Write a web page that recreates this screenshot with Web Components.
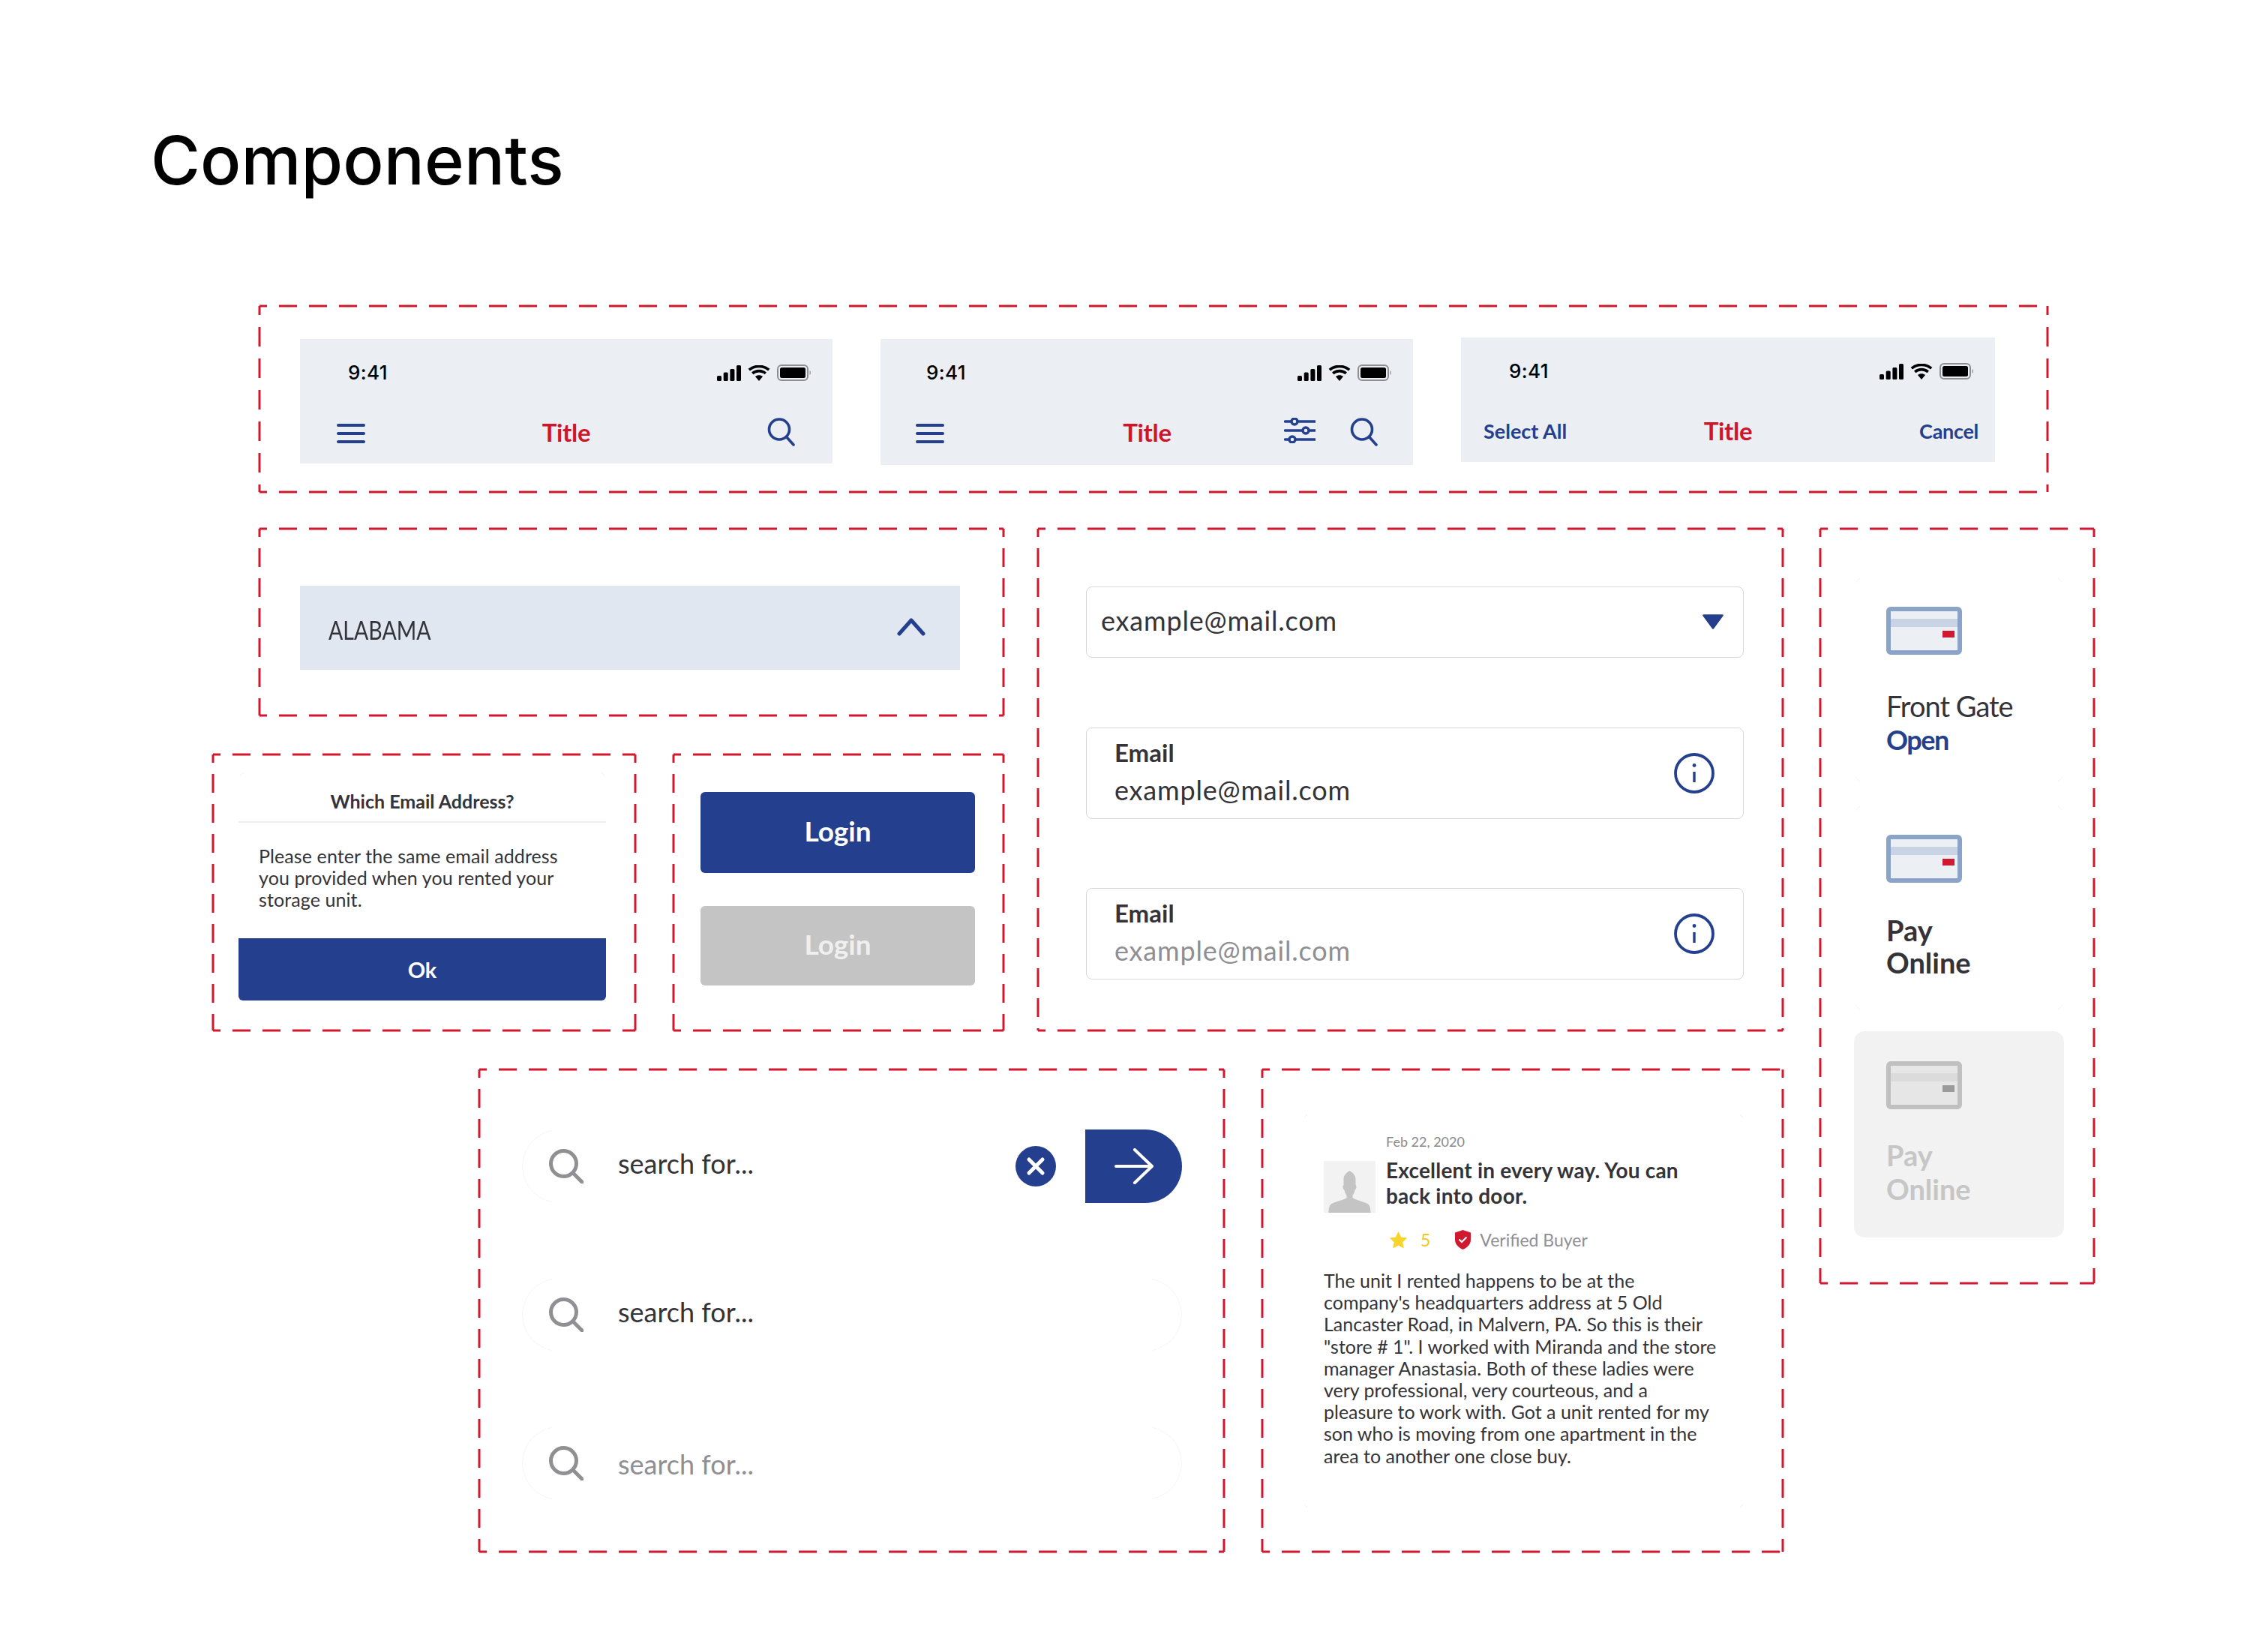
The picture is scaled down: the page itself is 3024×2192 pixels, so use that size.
<!DOCTYPE html>
<html lang="en"><head><meta charset="utf-8"><title>Components</title>
<style>
html,body{margin:0;background:#fff}
body{--ui:Lato,"Noto Sans",sans-serif;--navy:#243f8e;--red:#d0182f;--ink:#333338;font-family:var(--ui);color:var(--ink);width:3024px;height:2192px;overflow:hidden}
.page{display:flex;flex-direction:column;padding:0 0 0 200px}
.top{margin-left:145px}
.below{display:flex;align-items:flex-start;gap:48px;margin-left:83px;margin-top:47px}
.main{display:flex;flex-direction:column;gap:50px}
.rowA{display:flex;gap:44px}
.rowB{display:flex;gap:49px;margin-left:355px}
.leftcol{display:flex;flex-direction:column;gap:50px}
.pair{display:flex;gap:49px}
</style></head><body>
<div class="page">
  <page-title>Components</page-title>
  <dash-box class="top" style="width:2386px;height:250px;--vp:26 16;--pad:45px 0 0 55px;--flow:row;--gap:64px">
    <phone-bar><nav-icon slot="left" kind="menu"></nav-icon><nav-icon slot="right" kind="search"></nav-icon></phone-bar>
    <phone-bar style="height:168px;--time-pad:61px;--nav-l:47px;--nav-r:46px"><nav-icon slot="left" kind="menu"></nav-icon><nav-icon slot="right" kind="sliders"></nav-icon><nav-icon slot="right" kind="search"></nav-icon></phone-bar>
    <phone-bar style="margin-top:-2px;width:712px;--nav-l:26px;--nav-r:26px"><nav-text slot="left" style="margin-left:4px">Select All</nav-text><nav-text slot="right" style="margin-right:-4px;letter-spacing:-.3px">Cancel</nav-text></phone-bar>
  </dash-box>
  <div class="below">
    <div class="main">
      <div class="rowA">
        <div class="leftcol">
          <dash-box style="width:994px;height:251px;margin-left:62px;--pad:77px 0 0 55px">
            <state-select>ALABAMA</state-select>
          </dash-box>
          <div class="pair">
            <dash-box style="width:565px;height:370px;--pad:23px 0 0 35px"><alert-dialog heading="Which Email Address?" action="Ok">Please enter the same email address<br>you provided when you rented your<br>storage unit.</alert-dialog></dash-box>
            <dash-box style="width:442px;height:370px;--pad:51px 0 0 37px;--gap:44px">
              <login-button>Login</login-button>
              <login-button disabled style="height:106px">Login</login-button>
            </dash-box>
          </div>
        </div>
        <dash-box style="width:995px;height:671px;--pad:78px 0 0 65px;--gap:0">
          <select-field>example@mail.com</select-field>
          <label-field label="Email" style="margin-top:93px">example@mail.com</label-field>
          <label-field label="Email" muted style="margin-top:92px">example@mail.com</label-field>
        </dash-box>
      </div>
      <div class="rowB">
        <dash-box style="width:995px;height:645px;--pad:81px 0 0 58px;--gap:100px">
          <search-row active>search for...</search-row>
          <search-row>search for...</search-row>
          <search-row muted>search for...</search-row>
        </dash-box>
        <dash-box style="width:696px;height:645px;--pad:59px 0 0 55px">
          <review-card date="Feb 22, 2020" rating="5" badge="Verified Buyer">
            <span slot="title">Excellent in every way. You can<br>back into door.</span>
            The unit I rented happens to be at the<br>company's headquarters address at 5 Old<br>Lancaster Road, in Malvern, PA. So this is their<br>"store # 1". I worked with Miranda and the store<br>manager Anastasia. Both of these ladies were<br>very professional, very courteous, and a<br>pleasure to work with. Got a unit rented for my<br>son who is moving from one apartment in the<br>area to another one close buy.
          </review-card>
        </dash-box>
      </div>
    </div>
    <dash-box style="width:367px;height:1008px;--pad:65px 0 0 46px;--gap:29px">
      <tile-card style="--tile-gap:46px" line1="Front Gate" line2="Open" variant="status"></tile-card>
      <tile-card style="--tile-gap:42px" line1="Pay" line2="Online" variant="bold"></tile-card>
      <tile-card style="--tile-gap:39px;margin-top:-2px" line1="Pay" line2="Online" variant="disabled"></tile-card>
    </dash-box>
  </div>
</div>
<script>
const maskOf=(w,h,bottom=true)=>{const g='linear-gradient(#000 0 0)',b=bottom?`${w}px ${h}px`:'0 0',m=`${g} 0 0/${w}px ${h}px no-repeat,${g} 100% 0/${w}px ${h}px no-repeat,${g} 0 100%/${b} no-repeat,${g} 100% 100%/${b} no-repeat`;return `-webkit-mask:${m};mask:${m};`};
const faint=(w,h,c,r,bottom=true)=>`position:absolute;inset:0;border:1.5px solid ${c};box-sizing:border-box;border-radius:${r}px;pointer-events:none;${maskOf(w,h,bottom)}`;
const ICONS={
 menu:`<svg width="38" height="28" viewBox="0 0 38 28" style="margin-top:3px"><g stroke="#243f8e" stroke-width="4" stroke-linecap="round"><path d="M2 3h34M2 14h34M2 25h34"/></g></svg>`,
 search:`<svg width="38" height="38" viewBox="0 0 38 38" fill="none" stroke="#243f8e" stroke-width="3.6" stroke-linecap="round"><circle cx="16" cy="15.500" r="13.500"/><path d="M25.500 25.500L35 36"/></svg>`,
 sliders:`<svg width="42" height="34" viewBox="0 0 42 34" fill="none" stroke="#243f8e" stroke-width="3.400" stroke-linecap="round" style="margin-right:46px"><path d="M1.500 5h40M1.500 17h40M1.500 29h40"/><circle cx="14" cy="5" r="4" fill="#ebeef3"/><circle cx="29" cy="17" r="4" fill="#ebeef3"/><circle cx="11" cy="29" r="4" fill="#ebeef3"/></svg>`
};
const define=(name,cls)=>customElements.define(name,cls);
class Base extends HTMLElement{
  constructor(){super();this.attachShadow({mode:'open'})}
  connectedCallback(){this.shadowRoot.innerHTML=this.render()}
  a(n,d=''){return this.getAttribute(n)??d}
}
define('page-title',class extends Base{render(){return `<style>:host{display:block;box-sizing:content-box;font:500 90px/120px Inter,sans-serif;color:#000;padding:154px 0 0 1px;height:253px;letter-spacing:.1px}</style><slot></slot>`}});
define('dash-box',class extends Base{render(){return `<style>
:host{display:block;position:relative;box-sizing:border-box;flex:none}
svg{position:absolute;left:.5px;top:.5px;width:calc(100% - 2px);height:calc(100% - 2px);overflow:visible;pointer-events:none}
line{stroke:#d0182f;stroke-width:3;stroke-dasharray:24 16;stroke-dashoffset:14}
.v{stroke-dasharray:var(--vp,25 15)}
.in{display:flex;flex-direction:var(--flow,column);gap:var(--gap,0);padding:var(--pad,0);align-items:flex-start}
</style><svg><line x1="0" y1="0" x2="100%" y2="0"/><line x1="0" y1="100%" x2="100%" y2="100%"/><line class="v" x1="0" y1="0" x2="0" y2="100%"/><line class="v" x1="100%" y1="0" x2="100%" y2="100%"/></svg><div class="in"><slot></slot></div>`}});
define('status-row',class extends Base{render(){return `<style>
:host{display:flex;align-items:center;justify-content:space-between;height:42px;padding:24px 29px 0 var(--time-pad,64px)}
.t{font:500 26px/1 Inter,"Liberation Sans",sans-serif;color:#000;letter-spacing:.4px}
.i{display:flex;align-items:center;gap:9px}
</style><span class="t">9:41</span><span class="i">
<svg width="32" height="21" viewBox="0 0 32 21"><g fill="#000"><rect x="0" y="14" width="6" height="7" rx="1.500"/><rect x="8.700" y="9.500" width="6" height="11.500" rx="1.500"/><rect x="17.400" y="5" width="6" height="16" rx="1.500"/><rect x="26" y="0" width="6" height="21" rx="1.500"/></g></svg>
<svg width="30" height="21" viewBox="0 0 30 21"><path d="M15 21l-5-6c3-2.300 7-2.300 10 0z" fill="#000"/><g fill="none" stroke="#000" stroke-width="3.600"><path d="M6.200 10.800c5-4.200 12.600-4.200 17.600 0"/><path d="M1.800 6.100c7.500-6.300 18.900-6.300 26.400 0"/></g></svg>
<svg width="45" height="22" viewBox="0 0 45 22"><rect x="1" y="1" width="40" height="20" rx="5" fill="none" stroke="#8e8e93" stroke-width="2"/><rect x="4" y="4" width="34" height="14" rx="2.500" fill="#000"/><path d="M43.500 8v6c1-.4 1.500-1.600 1.500-3s-.5-2.600-1.500-3z" fill="#9a9aa0"/></svg>
</span>`}});
define('nav-icon',class extends Base{render(){return `<style>:host{display:block;line-height:0}</style>${ICONS[this.a('kind')]}`}});
define('nav-text',class extends Base{render(){return `<style>:host{display:block;font:700 27px/36px var(--ui);color:var(--navy);padding-top:2px}</style><slot></slot>`}});
define('phone-bar',class extends Base{render(){return `<style>
:host{display:block;flex:none;width:710px;height:166px;background:#ebeef3;box-sizing:border-box}
.nav{display:grid;grid-template-columns:1fr auto 1fr;align-items:center;padding:38px var(--nav-r,49px) 0 var(--nav-l,49px);height:40px}
.l{display:flex}.r{display:flex;justify-content:flex-end}
b{font:700 33px/40px var(--ui);color:#d0152b;letter-spacing:-.3px}
</style><status-row></status-row><div class="nav"><div class="l"><slot name="left"></slot></div><b>Title</b><div class="r"><slot name="right"></slot></div></div>`}});
define('state-select',class extends Base{render(){return `<style>
:host{display:flex;align-items:center;justify-content:space-between;width:880px;height:112px;background:#e1e7f1;box-sizing:border-box;padding:0 46px 0 38px;font:400 34px/1 var(--ui);color:var(--ink)}
span{display:inline-block;transform:scaleX(.84);transform-origin:0 50%;padding-top:5px}
svg{margin-top:-2px}
</style><span><slot></slot></span><svg width="38" height="24" viewBox="0 0 38 24" fill="none" stroke="#243f8e" stroke-width="5" stroke-linecap="round" stroke-linejoin="round"><path d="M3 21L19 3l16 18"/></svg>`}});
define('alert-dialog',class extends Base{render(){return `<style>
:host{display:block;position:relative;width:490px;height:306px;font-family:var(--ui)}
.f{${faint(7,7,'#f2f2f2',12,false)}}
h2{margin:0;height:69px;box-sizing:border-box;border-bottom:2px solid #f0f0f0;text-align:center;font:700 25px/80px var(--ui);color:var(--ink)}
p{margin:0;padding:30px 27px 0;height:154px;box-sizing:border-box;font:400 25px/29.200px var(--ui);color:var(--ink);letter-spacing:.1px}
.b{height:83px;background:var(--navy);color:#fff;border-radius:0 0 6px 6px;display:flex;align-items:center;justify-content:center;font:700 29px/1 var(--ui)}
</style><div class="f"></div><h2>${this.a('heading')}</h2><p><slot></slot></p><div class="b">${this.a('action')}</div>`}});
define('login-button',class extends Base{render(){const d=this.hasAttribute('disabled');return `<style>
:host{display:flex;align-items:center;justify-content:center;box-sizing:border-box;padding-bottom:6px;width:366px;height:108px;border-radius:6px;background:${d?'#c4c4c4':'var(--navy)'};color:${d?'#efefef':'#fff'};font:700 37px/1 var(--ui)}
</style><slot></slot>`}});
define('select-field',class extends Base{render(){return `<style>
:host{display:flex;align-items:center;justify-content:space-between;width:877px;height:95px;box-sizing:border-box;border:1.5px solid #d8d8d8;border-radius:8px;padding:0 25px 5px 19px;font:400 36px/1 var(--ui);color:var(--ink);letter-spacing:.8px}
</style><span><slot></slot></span><svg width="30" height="20" viewBox="0 0 30 20" style="margin-top:3px"><path d="M2.500 1.500h25L15 18.500z" fill="#243f8e" stroke="#243f8e" stroke-width="2.500" stroke-linejoin="round"/></svg>`}});
define('label-field',class extends Base{render(){const m=this.hasAttribute('muted');return `<style>
:host{display:flex;align-items:center;justify-content:space-between;width:877px;height:122px;box-sizing:border-box;border:1.5px solid #d8d8d8;border-radius:8px;padding:0 38px 0 37px}
.t{margin-top:-6px}
.l{display:block;font:700 33px/40px var(--ui);color:var(--ink);margin-bottom:10px}
.v{display:block;font:400 36px/40px var(--ui);letter-spacing:.8px;color:${m?'#8f8f93':'var(--ink)'}}
</style><span class="t"><span class="l">${this.a('label')}</span><span class="v"><slot></slot></span></span><svg width="54" height="54" viewBox="0 0 54 54" fill="none" stroke="#243f8e"><circle cx="27" cy="27" r="25" stroke-width="3.800"/><path d="M27 25v14" stroke-width="3.400"/><circle cx="27" cy="16.500" r="2.400" fill="#243f8e" stroke="none"/></svg>`}});
define('search-row',class extends Base{render(){const act=this.hasAttribute('active'),m=this.hasAttribute('muted');const f=faint(40,49,'#f4f4f4',49);return `<style>
:host{display:block;position:relative;width:880px;height:98px}
.f{${f}}
.row{display:flex;align-items:center;height:100%;padding-left:36px}
.t{font:400 36px/1 var(--ui);margin-left:46px;color:${m?'#8f8f93':'var(--ink)'};${m?'padding-top:2px':'padding-bottom:8px'}}
.x{margin-left:auto;margin-right:39px;line-height:0}
.go{width:129px;height:98px;border-radius:0 49px 49px 0;background:var(--navy);display:flex;align-items:center;justify-content:center}
</style><div class="f"${act?' style="-webkit-mask-size:40px 49px,0 0,40px 49px,0 0;mask-size:40px 49px,0 0,40px 49px,0 0"':''}></div>
<div class="row"><svg width="46" height="46" viewBox="0 0 46 46" fill="none" stroke="#909094" stroke-width="5" stroke-linecap="round"><circle cx="19.500" cy="19.500" r="17"/><path d="M32 32l12 12"/></svg><span class="t"><slot></slot></span>
${act?`<span class="x"><svg width="54" height="54" viewBox="0 0 54 54"><circle cx="27" cy="27" r="27" fill="#243f8e"/><path d="M18 18l18 18M36 18L18 36" stroke="#fff" stroke-width="5" stroke-linecap="round"/></svg></span><span class="go"><svg width="52" height="48" viewBox="0 0 52 48" fill="none" stroke="#fff" stroke-width="4" stroke-linecap="round" stroke-linejoin="round"><path d="M2 24h48M27 2l23 22-23 22"/></svg></span>`:''}</div>`}});
define('review-card',class extends Base{render(){return `<style>
:host{display:block;position:relative;width:589px;height:528px;font-family:var(--ui)}
.f{${faint(6,6,'#f0f0f0',12)}}
.in{padding-left:28px}
.d{font:400 18px/24px var(--ui);color:#8a8a8e;margin:26px 0 0 83px;height:24px}
.h{display:flex;gap:14px;margin-top:14px}
.av{flex:none;width:69px;height:69px;background:#f2f2f2;line-height:0}
.ti{font:700 28px/34px var(--ui);color:var(--ink);margin-top:-5px;letter-spacing:.2px}
.m{display:flex;align-items:center;height:34px;margin:19px 0 0 87px;font:400 23px/34px var(--ui);color:#8f8f93}
.s{color:#f5c518;margin:0 32px 0 17px}
.m svg.sh{margin-right:11px}
.b{font:400 25px/29.200px var(--ui);color:var(--ink);margin-top:23px;white-space:nowrap}
</style><div class="f"></div><div class="in">
<div class="d">${this.a('date')}</div>
<div class="h"><svg class="av" viewBox="0 0 69 69"><path d="M34.500 13c-4 2.500-8 6-8 11v8c-1.500 1-1.500 5 1 7 .5 3 2 5.500 3 7v3c-3 3-15 5-20 8-3 2-4 6-4 12h56c0-6-1-10-4-12-5-3-17-5-20-8v-3c1-1.500 2.500-4 3-7 2.500-2 2.500-6 1-7v-8c0-5-4-8.500-8-11z" fill="#c4c4c4"/></svg><div class="ti"><slot name="title"></slot></div></div>
<div class="m"><svg width="25" height="25" viewBox="0 0 25 25"><path d="M12.500 1l3.600 7.600 8.100 1-6 5.600 1.600 8.300-7.300-4.100-7.300 4.100 1.600-8.300-6-5.600 8.100-1z" fill="#f7d32b"/></svg><span class="s">${this.a('rating')}</span><svg class="sh" width="23" height="26" viewBox="0 0 23 26"><path d="M11.500 0L22 3.500V13c0 6-4.500 10.500-10.500 13C5.500 23.500 1 19 1 13V3.500z" fill="#d0182f"/><path d="M6.500 12.500l3.500 3.500 6.500-6.500" fill="none" stroke="#fff" stroke-width="2.200"/></svg><span>${this.a('badge')}</span></div>
<div class="b"><slot></slot></div></div>`}});
define('tile-card',class extends Base{render(){const v=this.a('variant'),dis=v==='disabled';
const c=dis?['#c0c0c0','#e6e6e6','#dbdbdb','#9b9b9b']:['#8aa3c8','#ecf0f5','#c8d4e6','#d0182f'];
const l1={status:'400 38px/45px',bold:'700 38px/43px',disabled:'700 38px/45px'}[v];
return `<style>
:host{display:block;position:relative;width:280px;height:275px;box-sizing:border-box;padding:40px 0 0 43px;border-radius:14px;background:${dis?'#f2f2f2':'transparent'};font-family:var(--ui)}
.f{${faint(8,8,'#f2f2f2',14)}}
svg{display:block;margin-bottom:var(--tile-gap,45px)}
.a{display:block;font:${l1} var(--ui);color:${dis?'#c6c6c6':'var(--ink)'};${v==='status'?'letter-spacing:-1px':''}}
.b{display:block;font:700 ${v==='status'?'36px':'38px'}/${v==='bold'?43:45}px var(--ui);color:${v==='status'?'var(--navy)':dis?'#c6c6c6':'var(--ink)'};${v==='status'?'letter-spacing:-1.5px':''}}
</style>${dis?'':'<div class="f"></div>'}<svg width="101" height="64" viewBox="0 0 101 64"><rect x="3" y="3" width="95" height="58" rx="3" fill="${c[1]}" stroke="${c[0]}" stroke-width="6"/><rect x="6" y="16" width="89" height="11" fill="${c[2]}"/><rect x="75" y="32" width="16" height="9" fill="${c[3]}"/></svg><span class="a">${this.a('line1')}</span><span class="b">${this.a('line2')}</span>`}});
</script>
</body></html>
